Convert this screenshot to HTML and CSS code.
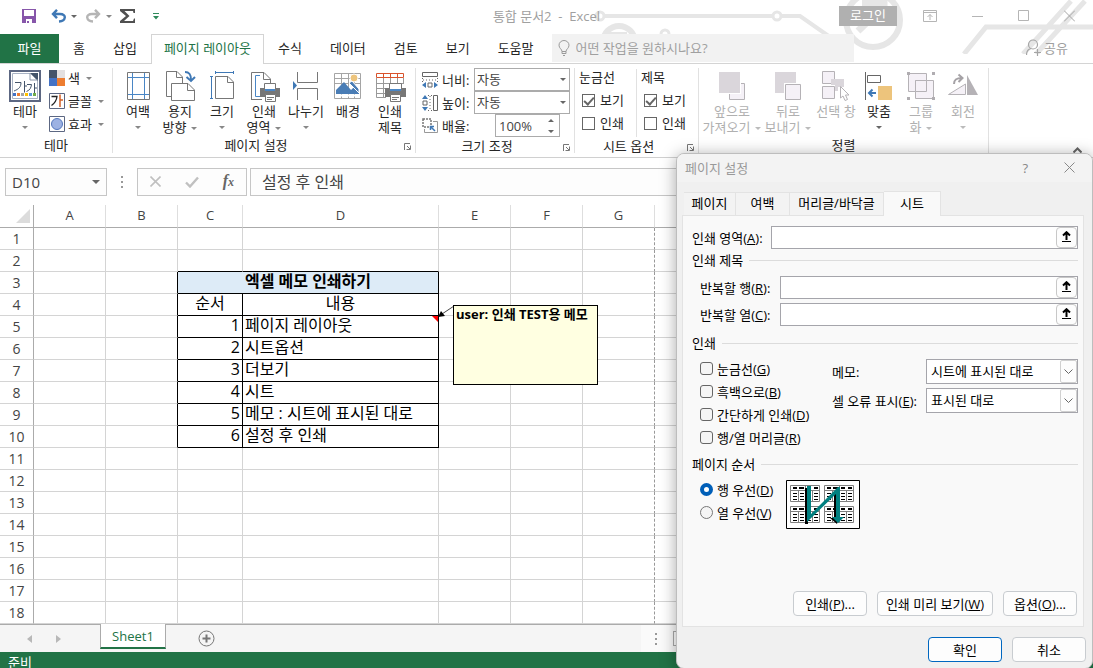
FILE: index.html
```html
<!DOCTYPE html>
<html lang="ko">
<head>
<meta charset="utf-8">
<title>통합 문서2 - Excel</title>
<link rel="stylesheet" href="styles.css">
</head>
<body>
<header class="top">
  <svg class="circuit" width="500" height="54" viewBox="593 0 500 54" fill="none" stroke="#e6e6e6" stroke-width="4">
    <circle cx="600" cy="16" r="4" stroke-width="3"/><path d="M604 16H773M781 16H800L830 37"/><circle cx="777" cy="16" r="4" stroke-width="3"/>
    <circle cx="619" cy="42" r="16" stroke-width="6"/><path d="M609 34H627"/>
    <circle cx="665" cy="34" r="4" stroke-width="3"/><path d="M669 36H766"/>
    <circle cx="873" cy="20" r="27" stroke-width="6"/><path d="M862 3H884V26M884 6L858 31" stroke-width="7"/>
    <path d="M964 54L986 27H1093M1023 54L1071 1M1036 54L1085 1" stroke-width="5"/>
  </svg>
  <div class="titlebar">
    <div class="qat">
      <button class="plain" aria-label="저장"><svg width="14" height="14"><path d="M0 0H14V14H0Z" fill="#8756aa"/><path d="M2 1H12V7H2ZM4 10H10V14H4Z" fill="#fff"/><path d="M5 12H7V14H5Z" fill="#8756aa"/></svg></button>
      <button class="plain" aria-label="실행 취소"><svg width="15" height="14" fill="none" stroke="#3f78b5" stroke-width="2.4"><path d="M2 5H9C16 5 15 12 8 12.5M6 .8L2 5L6 9.2"/></svg></button>
      <i class="caret dark"></i>
      <button class="plain redo" aria-label="다시 실행"><svg width="15" height="14" fill="none" stroke="#b5b5b5" stroke-width="2.4"><path d="M13 5H6C-1 5 0 12 7 12.5M9 .8L13 5L9 9.2"/></svg></button>
      <i class="caret"></i>
      <button class="plain sum" aria-label="합계"><svg width="15" height="14"><path d="M0 0H15V4H13.500L13 2H4.500L9.500 7L4 12H13L14 9.500H15V14H0V12L6 7L0 2Z" fill="#505050"/></svg></button>
      <button class="plain more" aria-label="빠른 실행 도구 모음"><svg width="6" height="7" fill="#2f8a5b"><path d="M0 0H6V1H0ZM0 3H6L3 6.500Z"/></svg></button>
    </div>
    <div class="doc-title">통합 문서2&nbsp; -&nbsp; Excel</div>
    <div class="window-tools">
      <button class="login">로그인</button>
      <button class="plain" aria-label="리본 표시 옵션"><svg width="14" height="12" fill="none" stroke="#b5b5b5"><path d="M.5.500H13.500V11.500H.500ZM.500 2.500H13.500M7 10V4.500M4.500 7L7 4.500L9.500 7"/></svg></button>
      <button class="plain" aria-label="최소화"><svg width="11" height="12" stroke="#b5b5b5"><path d="M0 6.500H11"/></svg></button>
      <button class="plain" aria-label="최대화"><svg width="11" height="12" fill="none" stroke="#b5b5b5"><path d="M.5.500H10.500V10.500H.500Z"/></svg></button>
      <button class="plain" aria-label="닫기"><svg width="11" height="12" stroke="#a5a5a5"><path d="M0 .5L11 11.500M11 .5L0 11.500"/></svg></button>
    </div>
  </div>
  <nav class="tabs">
    <button class="tab file">파일</button>
    <button class="tab">홈</button>
    <button class="tab">삽입</button>
    <button class="tab active">페이지 레이아웃</button>
    <button class="tab">수식</button>
    <button class="tab">데이터</button>
    <button class="tab">검토</button>
    <button class="tab">보기</button>
    <button class="tab">도움말</button>
    <label class="tell-me">
      <svg width="12" height="16" fill="none" stroke="#9a9a9a"><path d="M4 11.500C4 9 1 8.500 1 5.200A5 4.700 0 0 1 11 5.200C11 8.500 8 9 8 11.500V13.500H4ZM4 11.500H8M5 15.500H7"/></svg>
      <input type="text" placeholder="어떤 작업을 원하시나요?" aria-label="어떤 작업을 원하시나요?">
    </label>
    <button class="share"><svg width="15" height="17" fill="none" stroke="#a5a5a5" stroke-width="1.200"><circle cx="7" cy="5.500" r="4.500"/><path d="M.5 16C.5 12 2.500 10 5 9.500M8 13.500H15M11.500 10V17"/></svg>공유</button>
  </nav>
</header>

<section class="ribbon">
  <div class="group g-theme">
    <div class="tools">
      <button class="big"><svg width="32" height="32"><path d="M1 1H31V31H1Z" fill="#fff" stroke="#5c6782" stroke-width="2"/><path d="M3.500 3.500H22L28.500 10V28.500H3.500Z" fill="#fff" stroke="#a9b3c4"/><path d="M21 3H29V11Z" fill="#44546a"/><path d="M21 3V10H29" fill="none" stroke="#8d98aa"/><g fill="none" stroke="#44546a"><path d="M6 12.500H12C12 17 10 19 5 21M15.500 11V22.500M15.500 16H18M18 14.500H22.500C22 18 21 20 17.500 21.500M25.500 13V23M25.500 18H28"/></g><path d="M4 23H7V26H4Z" fill="#4472c4"/><path d="M8 23H11V26H8Z" fill="#ed7d31"/><path d="M12 23H15V26H12Z" fill="#a5a5a5"/><path d="M16 23H19V26H16Z" fill="#ffc000"/><path d="M20 23H23V26H20Z" fill="#5b9bd5"/><path d="M24 23H27V26H24Z" fill="#70ad47"/></svg><span>테마</span><i class="caret"></i></button>
      <div class="stack">
        <button class="small"><svg width="16" height="16"><path d="M0 0H8V8H0Z" fill="#44546a"/><path d="M8 0H16V8H8Z" fill="#e3e0e0"/><path d="M0 8H8V16H0Z" fill="#4472c4"/><path d="M8 8H16V16H8Z" fill="#ed7d31"/></svg>색<i class="caret"></i></button>
        <button class="small"><svg width="16" height="16" fill="none"><path d="M.5.500H15.500V15.500H.500Z" fill="#fff" stroke="#5c6782"/><path d="M2.500 3.500H8C7.500 8 6 10 2.500 12.500" stroke="#222" stroke-width="1.300"/><path d="M11 1.500V14M11 7H14" stroke="#d26028" stroke-width="1.500"/></svg>글꼴<i class="caret"></i></button>
        <button class="small"><svg width="16" height="16"><path d="M.5.500H15.500V15.500H.500Z" fill="#fff" stroke="#5c6782"/><circle cx="8" cy="8" r="5.500" fill="#9db2e3" stroke="#5477bd"/></svg>효과<i class="caret"></i></button>
      </div>
    </div>
    <div class="caption"><span>테마</span></div>
  </div>

  <div class="group g-page">
    <div class="tools">
      <button class="big"><svg width="32" height="32" fill="none"><path d="M5.500 2.500H27.500V29.500H5.500Z" stroke="#777"/><path d="M10.500 3V29M22.500 3V29M6 7.500H27M6 24.500H27" stroke="#4a86c5"/></svg><span>여백</span><i class="caret"></i></button>
      <button class="big"><svg width="32" height="32" fill="#fff" stroke="#777"><path d="M2.500 1.500H13L18.500 7V26.500H2.500Z"/><path d="M12.500 1.500V7.500H18.500" fill="none"/><path d="M7.500 13.500H24L30.500 20V30.500H7.500Z"/><path d="M23.500 13.500V20.500H30.500" fill="none"/><path d="M21 2C26 2 27 5 27 10M22.500 7L27 11L31 7" fill="none" stroke="#3f78b5" stroke-width="2"/></svg><span>용지<br>방향<i class="caret"></i></span></button>
      <button class="big"><svg width="32" height="32" fill="none"><path d="M9.500 6.500H22L27.500 12V28.500H9.500Z M21.500 6.500V12.500H27.500" stroke="#777"/><path d="M9 2.500H28M9.500 1V4M27.500 1V4M5.500 7V28M4 6.500H7M4 28.500H7" stroke="#3f78b5"/></svg><span>크기</span><i class="caret"></i></button>
      <button class="big"><svg width="32" height="32" fill="none"><path d="M3.500 29.500V2.500H16L22.500 9V14M15.500 3V9.500H22M3 29.500H14" stroke="#777"/><path d="M12 5.500H7.500V26.500H12" stroke="#4a86c5"/><path d="M12 18H32V27H12Z" fill="#777"/><path d="M16.500 13.500H27.500V20.500H16.500ZM17.500 24.500H27.500V31.500H17.500Z" fill="#fff" stroke="#777"/><path d="M17 19H27V21H17Z" fill="#4a86c5"/><path d="M19 27.500H26M19 29.500H24" stroke="#777"/></svg><span>인쇄<br>영역<i class="caret"></i></span></button>
      <button class="big"><svg width="32" height="32" fill="none" stroke="#777"><path d="M7.500 2V12.500H27.500V2M7.500 30V18.500H27.500V30"/><path d="M3 11L7 15.500L3 20Z" fill="#3f78b5" stroke="none"/></svg><span>나누기</span><i class="caret"></i></button>
      <button class="big"><svg width="32" height="32" fill="none"><path d="M2.500 3.500H28.500V28.500H2.500ZM2.500 8.500H28M2.500 13.500H28M9.500 3V28M16.500 3V28M22.500 3V28" stroke="#a5a5a5"/><circle cx="22" cy="8" r="4" fill="#edc47c" stroke="#fff"/><path d="M4 24V20L12 12L19 20L22 17L27 22V24Z" fill="#4a7db5"/><path d="M17 13L20 11L27 19V23Z" fill="#4a7db5" stroke="#fff"/><path d="M3 25.500H28" stroke="#fff" stroke-width="2"/></svg><span>배경</span></button>
      <button class="big"><svg width="32" height="32" fill="none"><path d="M2.500 8V27.500H12M2 13.500H29M2 18.500H14M2 23.500H12M9.500 8V28M16.500 8V14M23.500 8V14M29.500 8V14" stroke="#999"/><path d="M2.500 3.500H29.500V7.500H2.500ZM9.500 3V8M16.500 3V8M23.500 3V8" stroke="#d9532c"/><path d="M11 18H32V27H11Z" fill="#777"/><path d="M15.500 13.500H27.500V20.500H15.500ZM16.500 24.500H26.500V31.500H16.500Z" fill="#fff" stroke="#777"/><path d="M16 19H27V21H16Z" fill="#4a86c5"/><path d="M18 27.500H25M18 29.500H23" stroke="#777"/></svg><span>인쇄<br>제목</span></button>
    </div>
    <div class="caption"><span>페이지 설정</span><svg class="launch" width="7" height="7" fill="none" stroke="#777"><path d="M.5 7V.5H6M3 3L6 6M6.500 2.500V6.500H2.500"/></svg></div>
  </div>

  <div class="group g-scale">
    <div class="tools fields">
      <div class="field"><svg width="16" height="16" fill="none" stroke="#666"><path d="M.5.500H15.500V4.500H.500Z"/><path d="M.5 6V10M15.500 6V10M1 8H15" stroke-dasharray="1 2"/><path d="M6 11H10V15H6Z"/><path d="M0 13L4 10V16ZM16 13L12 10V16Z" fill="#3f78b5" stroke="none"/></svg><label for="w">너비:</label><span class="pick"><select id="w"><option>자동</option></select><i class="caret dark"></i></span></div>
      <div class="field"><svg width="16" height="16" fill="none" stroke="#666"><path d="M11.500.500H15.500V15.500H11.500Z"/><path d="M6 .5H10M6 15.500H10M8 1V15" stroke-dasharray="1 2"/><path d="M1 6H5V10H1Z"/><path d="M3 0L0 4H6ZM3 16L0 12H6Z" fill="#3f78b5" stroke="none"/></svg><label for="h">높이:</label><span class="pick"><select id="h"><option>자동</option></select><i class="caret dark"></i></span></div>
      <div class="field"><svg width="16" height="16" fill="none" stroke="#777"><path d="M1 1H9V9H1Z" stroke-dasharray="2 1" stroke-width="1.500"/><path d="M11 3.500H15.500V14.500H2.500V11" stroke="#999"/><path d="M13 13L8.500 8.500M8.500 12V8.500H12" stroke="#3f78b5" stroke-width="1.500"/></svg><label for="z">배율:</label><span class="spin"><input id="z" type="text" value="100%"><svg width="6" height="14" fill="#666"><path d="M0 3L3 0L6 3ZM0 11H6L3 14Z"/></svg></span></div>
    </div>
    <div class="caption"><span>크기 조정</span><svg class="launch" width="7" height="7" fill="none" stroke="#777"><path d="M.5 7V.5H6M3 3L6 6M6.500 2.500V6.500H2.500"/></svg></div>
  </div>

  <div class="group g-sheet">
    <div class="tools">
      <div class="options"><span>눈금선</span><label><input type="checkbox" checked>보기</label><label><input type="checkbox">인쇄</label></div>
      <div class="options"><span>제목</span><label><input type="checkbox" checked>보기</label><label><input type="checkbox">인쇄</label></div>
    </div>
    <div class="caption"><span>시트 옵션</span><svg class="launch" width="7" height="7" fill="none" stroke="#777"><path d="M.5 7V.5H6M3 3L6 6M6.500 2.500V6.500H2.500"/></svg></div>
  </div>

  <div class="group g-arrange">
    <div class="tools">
      <button class="big off w60"><svg width="32" height="32"><path d="M13.500 13.500H28.500V29.500H13.500Z" fill="#f5f1f7" stroke="#b5b2b6"/><path d="M2 1H25V24H2Z" fill="#fff"/><path d="M3 2H24V23H3Z" fill="#dad6db"/></svg><span>앞으로<br>가져오기<i class="caret"></i></span></button>
      <button class="big off w52"><svg width="32" height="32"><path d="M3 2H24V23H3Z" fill="#dad6db"/><path d="M12 13H30V31H12Z" fill="#fff"/><path d="M13.500 14.500H28.500V29.500H13.500Z" fill="#f5f1f7" stroke="#b5b2b6"/></svg><span>뒤로<br>보내기<i class="caret"></i></span></button>
      <button class="big off w44"><svg width="32" height="32" fill="#f5f1f7" stroke="#b5b2b6"><path d="M2.500 1.500H14.500V13.500H2.500ZM2.500 16.500H14.500V28.500H2.500Z"/><path d="M11 9H24V17H18V21H15V15H11Z" fill="#dad6db" stroke="none"/><path d="M20.500 16.500V28L23 26L25 30.500L27.500 29.500L25.500 25H29Z" fill="#fff"/></svg><span>선택 창</span></button>
      <button class="big w42"><svg width="32" height="32" fill="none"><path d="M2.500 2V30" stroke="#666"/><path d="M4.500 5.500H17.500V12.500H4.500Z" fill="#fff" stroke="#666"/><path d="M15 16H29V30H15Z" fill="#edc47c"/><path d="M13 23H6M9.500 19.500L6 23L9.500 26.500" stroke="#3f78b5" stroke-width="2"/></svg><span>맞춤</span><i class="caret dark"></i></button>
      <button class="big off w42"><svg width="32" height="32" fill="#f5f1f7" stroke="#b5b2b6"><path d="M3.500 3.500H21.500V21.500H3.500Z"/><path d="M10.500 10.500H28.500V28.500H10.500Z"/><path d="M10.500 10.500H21.500V21.500H10.500Z"/><path d="M2 2H5V5H2ZM27 2H30V5H27ZM2 27H5V30H2ZM27 27H30V30H27Z" fill="#b0adb1" stroke="none"/></svg><span>그룹<br>화<i class="caret"></i></span></button>
      <button class="big off w42"><svg width="32" height="32" fill="none"><path d="M1.500 24.500H18.500V14Z" fill="#f5f1f7" stroke="#b5b2b6"/><path d="M20 5V25H31Z" fill="#b5b2b6"/><path d="M7 14C7 9 10 8 15 8M11.500 4.500L15.500 8L11.500 12" stroke="#a5a2a6" stroke-width="2"/></svg><span>회전</span><i class="caret"></i></button>
    </div>
    <div class="caption"><span>정렬</span></div>
  </div>
  <button class="plain collapse" aria-label="리본 접기"><svg width="9" height="6" fill="none" stroke="#666" stroke-width="2"><path d="M.5 5.500L4.500 1.500L8.500 5.500"/></svg></button>
</section>

<div class="formula-bar">
  <label class="name-box"><input type="text" value="D10" aria-label="이름 상자"><i class="caret dark wide"></i></label>
  <svg width="3" height="12" fill="#999"><path d="M0 0H2V2H0ZM0 5H2V7H0ZM0 10H2V12H0Z"/></svg>
  <div class="fx">
    <button class="plain" aria-label="취소"><svg width="11" height="11" stroke="#c0c0c0" stroke-width="1.600"><path d="M.5.500L10.500 10.500M10.500.500L.5 10.500"/></svg></button>
    <button class="plain" aria-label="입력"><svg width="14" height="12" fill="none" stroke="#c0c0c0" stroke-width="2.400"><path d="M1 6.500L5 10.500L13 1.500"/></svg></button>
    <button class="plain fn" aria-label="함수 삽입">f<small>x</small></button>
  </div>
  <input class="formula" type="text" value="설정 후 인쇄" aria-label="수식 입력줄">
</div>

<main class="sheet">
<table class="grid">
  <colgroup><col class="c-head"><col class="c-std"><col class="c-std"><col class="c-no"><col class="c-text"><col class="c-std"><col class="c-std"><col class="c-std"><col></colgroup>
  <thead><tr><th class="corner"><svg width="14" height="14" fill="#dcdcdc"><path d="M14 0V14H0Z"/></svg></th><th>A</th><th>B</th><th>C</th><th>D</th><th>E</th><th>F</th><th>G</th><th></th></tr></thead>
  <tbody>
  <tr><th>1</th><td></td><td></td><td></td><td></td><td></td><td></td><td class="brk"></td><td></td></tr>
  <tr><th>2</th><td></td><td></td><td class="kb"></td><td class="kb"></td><td></td><td></td><td class="brk"></td><td></td></tr>
  <tr><th>3</th><td></td><td class="kr"></td><td colspan="2" class="k head">엑셀 메모 인쇄하기</td><td></td><td></td><td class="brk"></td><td></td></tr>
  <tr><th>4</th><td></td><td class="kr"></td><td class="k mid">순서</td><td class="k mid">내용</td><td></td><td></td><td class="brk"></td><td></td></tr>
  <tr><th>5</th><td></td><td class="kr"></td><td class="k num">1</td><td class="k noted">페이지 레이아웃<svg class="flag" width="6" height="6" fill="#f00"><path d="M0 0H6V6Z"/></svg><svg class="pointer" width="17" height="14" fill="none" stroke="#444"><path d="M16 1L4 9"/><path d="M0 12L3 6L7 11Z" fill="#000" stroke="none"/></svg><div class="memo">user: 인쇄 TEST용 메모</div></td><td></td><td></td><td class="brk"></td><td></td></tr>
  <tr><th>6</th><td></td><td class="kr"></td><td class="k num">2</td><td class="k">시트옵션</td><td></td><td></td><td class="brk"></td><td></td></tr>
  <tr><th>7</th><td></td><td class="kr"></td><td class="k num">3</td><td class="k">더보기</td><td></td><td></td><td class="brk"></td><td></td></tr>
  <tr><th>8</th><td></td><td class="kr"></td><td class="k num">4</td><td class="k">시트</td><td></td><td></td><td class="brk"></td><td></td></tr>
  <tr><th>9</th><td></td><td class="kr"></td><td class="k num">5</td><td class="k">메모 : 시트에 표시된 대로</td><td></td><td></td><td class="brk"></td><td></td></tr>
  <tr><th>10</th><td></td><td class="kr"></td><td class="k num">6</td><td class="k">설정 후 인쇄</td><td></td><td></td><td class="brk"></td><td></td></tr>
  <tr><th>11</th><td></td><td></td><td></td><td></td><td></td><td></td><td class="brk"></td><td></td></tr>
  <tr><th>12</th><td></td><td></td><td></td><td></td><td></td><td></td><td class="brk"></td><td></td></tr>
  <tr><th>13</th><td></td><td></td><td></td><td></td><td></td><td></td><td class="brk"></td><td></td></tr>
  <tr><th>14</th><td></td><td></td><td></td><td></td><td></td><td></td><td class="brk"></td><td></td></tr>
  <tr><th>15</th><td></td><td></td><td></td><td></td><td></td><td></td><td class="brk"></td><td></td></tr>
  <tr><th>16</th><td></td><td></td><td></td><td></td><td></td><td></td><td class="brk"></td><td></td></tr>
  <tr><th>17</th><td></td><td></td><td></td><td></td><td></td><td></td><td class="brk"></td><td></td></tr>
  <tr><th>18</th><td></td><td></td><td></td><td></td><td></td><td></td><td class="brk"></td><td></td></tr>
  </tbody>
</table>
</main>

<div class="sheet-bar">
  <button class="plain" aria-label="이전 시트"><svg width="5" height="8" fill="#b8b8b8"><path d="M5 0V8L0 4Z"/></svg></button>
  <button class="plain" aria-label="다음 시트"><svg width="5" height="8" fill="#b8b8b8"><path d="M0 0V8L5 4Z"/></svg></button>
  <button class="sheet-tab">Sheet1</button>
  <button class="plain" aria-label="새 시트"><svg width="17" height="17" fill="none" stroke="#777"><circle cx="8.500" cy="8.500" r="7.500"/><path d="M4.500 8.500H12.500M8.500 4.500V12.500" stroke-width="2"/></svg></button>
  <div class="scroll"><svg width="3" height="12" fill="#999"><path d="M0 0H2V2H0ZM0 5H2V7H0ZM0 10H2V12H0Z"/></svg><span class="track"></span></div>
</div>
<footer class="status">준비</footer>

<section class="dialog" role="dialog" aria-labelledby="dlg-title">
  <div class="dlg-head">
    <span id="dlg-title">페이지 설정</span>
    <button class="plain help" aria-label="도움말">?</button>
    <button class="plain" aria-label="닫기"><svg width="11" height="11" stroke="#888"><path d="M.5.500L10.500 10.500M10.500.500L.5 10.500"/></svg></button>
  </div>
  <div class="dlg-tabs"><button class="dt1">페이지</button><button class="dt2">여백</button><button class="dt3">머리글/바닥글</button><button class="dt4 on">시트</button></div>
  <div class="panel">
    <div class="range"><label for="area">인쇄 영역(<u>A</u>):</label><span class="ref"><input id="area" type="text"><button aria-label="범위 선택"><svg width="9" height="11" fill="none" stroke="#000"><path d="M0 10.500H9"/><path d="M4.500 9V2M1 4.500L4.500 1.200L8 4.500" stroke-width="2"/></svg></button></span></div>
    <h2>인쇄 제목</h2>
    <div class="range sub"><label for="rr">반복할 행(<u>R</u>):</label><span class="ref"><input id="rr" type="text"><button aria-label="범위 선택"><svg width="9" height="11" fill="none" stroke="#000"><path d="M0 10.500H9"/><path d="M4.500 9V2M1 4.500L4.500 1.200L8 4.500" stroke-width="2"/></svg></button></span></div>
    <div class="range sub"><label for="rc">반복할 열(<u>C</u>):</label><span class="ref"><input id="rc" type="text"><button aria-label="범위 선택"><svg width="9" height="11" fill="none" stroke="#000"><path d="M0 10.500H9"/><path d="M4.500 9V2M1 4.500L4.500 1.200L8 4.500" stroke-width="2"/></svg></button></span></div>
    <h2>인쇄</h2>
    <div class="print">
      <div class="checks">
        <label><input type="checkbox">눈금선(<u>G</u>)</label>
        <label><input type="checkbox">흑백으로(<u>B</u>)</label>
        <label><input type="checkbox">간단하게 인쇄(<u>D</u>)</label>
        <label><input type="checkbox">행/열 머리글(<u>R</u>)</label>
      </div>
      <div class="combos">
        <label for="memo">메모:</label><span class="combo"><select id="memo"><option>시트에 표시된 대로</option></select><i><svg width="9" height="5" fill="none" stroke="#666"><path d="M.5.500L4.500 4.500L8.500.500"/></svg></i></span>
        <label for="err">셀 오류 표시(<u>E</u>):</label><span class="combo"><select id="err"><option>표시된 대로</option></select><i><svg width="9" height="5" fill="none" stroke="#666"><path d="M.5.500L4.500 4.500L8.500.500"/></svg></i></span>
      </div>
    </div>
    <h2>페이지 순서</h2>
    <div class="order">
      <div class="checks">
        <label><input type="radio" name="order" checked>행 우선(<u>D</u>)</label>
        <label><input type="radio" name="order">열 우선(<u>V</u>)</label>
      </div>
      <svg class="preview" width="74" height="49" viewBox="0 0 74 49">
        <defs><g id="pg"><path d="M.5.500H29.500V16.500H.500ZM.5 5.500H29.500M8.500 6V16M15.500 .5V16M22.500 6V16" fill="#fff" stroke="#808080"/><path d="M3 3H7M9 3H14M17 3H21M24 3H28" stroke="#000" stroke-width="2"/><path d="M3 8.500H7M3 11.500H7M3 14.500H7M10 8.500H14M10 11.500H14M10 14.500H14M17 8.500H21M17 11.500H21M17 14.500H21M24 8.500H28M24 11.500H28M24 14.500H28" stroke="#000"/></g></defs>
        <path d="M.5.500H73.500V48.500H.500Z" fill="#fff" stroke="#000"/>
        <use href="#pg" x="4" y="5"/><use href="#pg" x="38" y="5"/><use href="#pg" x="4" y="26"/><use href="#pg" x="38" y="26"/>
        <path d="M19 8H22V44H19ZM48 12H51V36H53L51 44L44 38H48Z" fill="#000"/>
        <path d="M21 6H25V34L52 7H54V37H58L52 43L46 37H50V14L21 42Z" fill="#008080"/>
      </svg>
    </div>
    <div class="panel-actions"><button>인쇄(<u>P</u>)...</button><button class="long">인쇄 미리 보기(<u>W</u>)</button><button>옵션(<u>O</u>)...</button></div>
  </div>
  <div class="dlg-actions"><button class="primary">확인</button><button>취소</button></div>
</section>
</body>
</html>
```

FILE: styles.css
```css
* { box-sizing: border-box; }
body {
  margin: 0;
  height: 100vh;
  display: flex;
  flex-direction: column;
  overflow: hidden;
  position: relative;
  background: #fff;
  color: #262626;
  font: 13px/16px "Open Sans", "Noto Sans CJK KR", sans-serif;
}
button, input, select { font: inherit; color: inherit; margin: 0; }
button { border: 0; background: none; padding: 0; white-space: nowrap; }
svg { display: block; flex: none; }
.plain { display: flex; align-items: center; justify-content: center; }
.caret {
  display: inline-block;
  flex: none;
  border: 3px solid transparent;
  border-top-color: #888;
  border-bottom: 0;
}
.caret.dark { border-top-color: #666; }
.caret.wide { border-width: 4px 4px 0; }

/* title bar and ribbon tabs */
.top { position: relative; flex: none; }
.circuit { position: absolute; top: 0; right: 0; z-index: -1; }
.titlebar { display: grid; grid-template-columns: 1fr auto 1fr; height: 34px; }
.qat { display: flex; align-items: center; padding: 0 0 2px 22px; }
.qat .plain { margin-right: 5px; }
.qat .plain:first-child { margin-right: 15px; }
.qat .redo { margin-left: 9px; }
.qat .sum { margin-left: 8px; }
.qat .more { margin-left: 13px; }
.doc-title { align-self: center; padding-bottom: 2px; color: #a0a0a0; }
.window-tools { display: flex; justify-content: flex-end; align-items: center; padding: 0 18px 2px 0; gap: 35px; }
.login { width: 58px; height: 20px; margin-right: -9px; padding-bottom: 2px; background: #b0b0b0; color: #fff; }
.tabs { display: flex; height: 30px; border-bottom: 1px solid #d4d4d4; }
.tab { padding: 0 14px 2px; height: 29px; }
.tab.file { width: 59px; background: #217346; color: #fff; }
.tab.active { height: 30px; padding: 0 12px 3px; border: 1px solid #d4d4d4; border-bottom: 0; background: #fff; color: #217346; }
.tell-me { display: flex; align-items: center; gap: 6px; width: 302px; height: 28px; margin-left: 4px; padding-left: 6px; background: #f2f2f2; }
.tell-me input { border: 0; background: none; padding: 0; width: 240px; }
.tell-me input::placeholder { color: #a0a0a0; opacity: 1; }
.share { display: flex; align-items: center; gap: 3px; margin-left: auto; margin-right: 25px; padding-bottom: 2px; color: #a0a0a0; }

/* ribbon */
.ribbon { display: flex; flex: none; height: 94px; border-bottom: 1px solid #d0d0d0; }
.group { display: flex; flex-direction: column; flex: none; margin: 4px 0; border-right: 1px solid #e1e1e1; }
.tools { display: flex; height: 71px; padding-top: 2px; }
.g-theme { width: 113px; }
.g-theme .tools { padding-left: 4px; }
.g-page { width: 303px; }
.g-page .tools { padding-left: 4px; }
.g-scale { width: 159px; }
.g-sheet { width: 124px; }
.g-arrange { width: 290px; }
.g-arrange .tools { padding-left: 3px; }
.big { display: flex; flex-direction: column; align-items: center; width: 42px; line-height: 16px; text-align: center; }
.big svg { margin-bottom: 1px; }
.big > .caret { margin-top: 7px; }
.big span .caret, .small .caret { margin-left: 5px; vertical-align: middle; }
.w60 { width: 60px; }
.w52 { width: 52px; }
.w44 { width: 44px; }
.off { color: #b0b0b0; }
.off .caret { border-top-color: #bbb; }
.stack { display: flex; flex-direction: column; gap: 7px; padding-left: 3px; }
.small { display: flex; align-items: center; height: 16px; gap: 3px; }
.small .caret { margin-left: 3px; }
.caption { display: flex; flex: 1; line-height: 16px; padding-top: 1px; }
.caption span { flex: 1; text-align: center; }
.launch { align-self: flex-end; margin: 0 4px 3px 5px; }
.fields { flex-direction: column; padding: 0 4px 0 6px; }
.field { display: flex; align-items: center; height: 23px; gap: 4px; }
.field label { width: 28px; white-space: nowrap; }
.pick { display: grid; align-items: center; width: 96px; height: 23px; }
.pick > * { grid-area: 1 / 1; }
.pick select { appearance: none; width: 100%; height: 23px; border: 1px solid #ababab; border-radius: 0; background: #fff; padding: 0 2px 1px; color: #444; }
.pick .caret { justify-self: end; margin-right: 4px; }
.spin { display: flex; align-items: center; width: 65px; height: 23px; margin-left: 21px; padding-right: 5px; border: 1px solid #ababab; }
.spin input { width: 100%; min-width: 0; border: 0; padding: 0 3px; color: #444; }
.options { display: flex; flex-direction: column; width: 61px; height: 68px; gap: 7px; padding-left: 4px; }
.g-sheet .tools { padding-top: 1px; }
.options + .options { border-left: 1px solid #e1e1e1; }
.options label { display: flex; align-items: center; gap: 5px; height: 16px; }
input[type="checkbox"] { appearance: none; flex: none; width: 13px; height: 13px; border: 1px solid #666; background: #fff; }
.options input { margin-left: 3px; }
.options input:checked::after { content: ""; display: block; width: 4px; height: 8px; margin: 0 0 0 3px; border: solid #666; border-width: 0 2px 2px 0; transform: rotate(42deg); }
.collapse { margin: auto 11px 4px auto; }

/* formula bar */
.formula-bar { display: flex; align-items: center; flex: none; height: 47px; padding: 0 0 0 5px; }
.name-box { display: flex; align-items: center; width: 102px; height: 28px; margin-right: 14px; padding: 0 6px; border: 1px solid #c6c6c6; background: #fdfdfd; font-size: 15px; color: #444; }
.name-box input { width: 100%; min-width: 0; border: 0; padding: 0; background: none; }
.fx { display: flex; align-items: center; justify-content: space-between; width: 110px; height: 28px; margin: 0 3px 0 13px; padding: 0 12px; border: 1px solid #c6c6c6; background: #fdfdfd; }
.fn { align-items: baseline; font: italic bold 16px/20px "Liberation Serif", serif; color: #666; }
.fn small { font-size: 12px; }
.formula { flex: 1; height: 28px; border: 1px solid #c6c6c6; padding: 0 11px 2px; font-size: 16px; color: #444; background: #fdfdfd; }

/* worksheet */
.sheet { flex: 1; min-height: 0; overflow: hidden; }
.grid { width: 100%; table-layout: fixed; border-collapse: separate; border-spacing: 0; color: #000; font-size: 16px; line-height: 19px; }
.c-head { width: 34px; }
.c-std { width: 72px; }
.c-no { width: 65px; }
.c-text { width: 196px; }
.grid th, .grid td { height: 22px; padding: 0; border: 0 solid #d4d4d4; border-width: 0 1px 1px 0; white-space: nowrap; }
.grid th { font-size: 14px; font-weight: 400; color: #444; }
.grid thead th { height: 23px; padding-bottom: 2px; font-size: 13px; border-bottom-color: #ababab; border-right-color: #dedede; }
.grid tbody th { border-right-color: #ababab; }
.grid thead .corner { border-right-color: #ababab; }
.corner svg { margin: 2px 3px 0 auto; }
.grid td { padding: 0 2px 2px; }
.grid .brk { border-right: 1px dashed #999; }
.grid .kr { border-right-color: #000; }
.grid .kb { border-bottom-color: #000; }
.grid .k { border-color: #000; }
.grid .head { background: #ddebf7; font-weight: 700; text-align: center; }
.grid .mid { text-align: center; }
.grid .num { text-align: right; }
.noted { position: relative; }
.flag { position: absolute; top: 0; right: 0; }
.pointer { position: absolute; left: 100%; top: -11px; }
.memo { position: absolute; left: calc(100% + 15px); top: -11px; width: 145px; height: 80px; padding: 0 2px; border: 1px solid #000; background: #ffffe1; font-size: 13px; line-height: 16px; font-weight: 700; }

/* sheet tabs and status bar */
.sheet-bar { display: flex; align-items: center; flex: none; height: 28px; border-top: 1px solid #ababab; background: #f5f5f5; padding-left: 27px; }
.sheet-bar .plain { margin-right: 24px; }
.sheet-tab { align-self: flex-start; width: 66px; height: 25px; margin: -1px 32px 0 15px; border: solid #ababab; border-width: 0 1px 0; border-bottom: 2px solid #217346; background: #fff; color: #217346; }
.scroll { display: flex; align-items: center; gap: 15px; flex: 1; height: 100%; margin-left: 402px; padding-left: 14px; background: #fafafa; }
.track { flex: 1; height: 15px; border: 1px solid #ababab; background: #fff; }
.status { flex: none; height: 16px; padding: 2px 8px; background: #217346; color: #fff; font-size: 13px; line-height: 16px; }

/* page setup window */
.dialog { position: absolute; right: 0; top: 153px; width: 417px; border: 1px solid #bdbdbd; border-radius: 8px; background: #f0f0f0; box-shadow: 0 2px 16px rgba(0, 0, 0, .35); color: #000; overflow: hidden; }
.dlg-head { display: flex; align-items: center; height: 28px; padding: 0 17px 1px 8px; background: #f3f3f3; color: #999; }
.help { margin-left: auto; margin-right: 36px; color: #888; }
.dlg-tabs { display: flex; align-items: flex-end; height: 33px; padding-left: 7px; }
.dlg-tabs button { height: 23px; padding-bottom: 2px; border: 1px solid #e3e3e3; border-width: 1px 1px 0 0; background: #f3f3f3; }
.dlg-tabs .dt1 { width: 52px; }
.dlg-tabs .dt2 { width: 54px; }
.dlg-tabs .dt3 { width: 94px; }
.dlg-tabs .dt4 { width: 57px; }
.dlg-tabs .on { height: 25px; margin-bottom: -1px; padding-bottom: 3px; background: #f9f9f9; position: relative; }
.panel { margin: 0 8px 0 5px; padding: 10px 5px 10px 9px; border: 1px solid #e3e3e3; background: #f9f9f9; }
.range { display: flex; align-items: center; height: 23px; }
.range label { width: 79px; }
.range.sub { padding-left: 8px; margin-top: 4px; }
.range.sub label { width: 80px; }
.ref { display: flex; flex: 1; height: 23px; border: 1px solid #a5a5ab; background: #fff; }
.ref input { flex: 1; min-width: 0; border: 0; padding: 0 4px; }
.ref button { display: grid; place-items: center; width: 21px; border: 1px solid #c8c8c8; border-radius: 4px; background: #fdfdfd; padding-bottom: 2px; }
.panel h2 { display: flex; align-items: center; gap: 6px; margin: 3px 0 4px; font-size: 13px; line-height: 16px; font-weight: 400; }
.panel h2::after { content: ""; flex: 1; height: 1px; background: #dcdcdc; }
.panel h2 + .sub { margin-top: 8px; }
.range.sub + h2 { margin-top: 9px; }
.print, .order { display: flex; justify-content: space-between; margin-top: 6px; padding-left: 8px; }
.checks { display: flex; flex-direction: column; }
.checks label { display: flex; align-items: center; height: 23px; }
.checks input { margin-right: 4px; }
.checks input[type="checkbox"] { border-radius: 3px; background: #f5f5f5; }
.checks input[type="radio"] { appearance: none; width: 13px; height: 13px; border: 1px solid #777; border-radius: 50%; background: #f5f5f5; }
.checks input[type="radio"]:checked { border: 4px solid #005fb8; background: #fff; }
.combos { display: grid; grid-template-columns: 94px 152px; grid-auto-rows: 25px; gap: 4px 0; align-items: center; align-content: start; padding-top: 2px; }
.combo { display: grid; height: 25px; }
.combo > * { grid-area: 1 / 1; }
.combo select { appearance: none; width: 100%; border: 1px solid #a5a5ab; border-radius: 0; background: #fff; padding: 0 4px 1px; }
.combo i { display: grid; place-items: center; justify-self: end; width: 17px; margin: 1px; border: 1px solid #d0d0d0; border-radius: 2px; background: #fdfdfd; pointer-events: none; }
.print + h2 { margin-top: 7px; }
.order { justify-content: flex-start; gap: 13px; }
.preview { margin-top: 2px; }
.panel-actions, .dlg-actions { display: flex; justify-content: flex-end; gap: 10px; }
.panel-actions { margin-top: 62px; padding-right: 1px; }
.panel-actions button, .dlg-actions button { width: 74px; height: 25px; border: 1px solid #c8ccd0; border-radius: 4px; background: #fdfdfd; }
.panel-actions .long { width: 116px; }
.dlg-actions { padding: 10px 6px 6px; }
.dlg-actions .primary { border-color: #0067c0; }
```
